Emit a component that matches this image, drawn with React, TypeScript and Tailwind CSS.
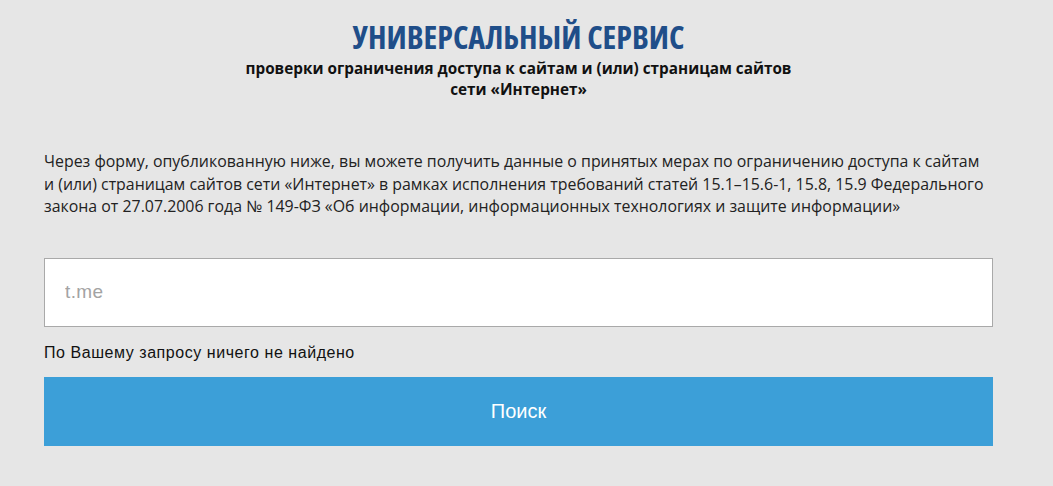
export default function App() {
  return (
    <div className="min-h-[486px] w-full bg-[#e6e6e6] font-['Open_Sans',sans-serif]">
      <div className="ml-[44px] w-[949px] pt-[18px]">
        <h1 className="text-center text-[32px] font-bold leading-[38px] text-[#1f4e89] [font-stretch:75%]">
          УНИВЕРСАЛЬНЫЙ СЕРВИС
        </h1>
        <p className="mt-[2px] text-center text-[15.3px] font-bold leading-[21px] text-[#111]">
          проверки ограничения доступа к сайтам и (или) страницам сайтов
          <br />
          сети «Интернет»
        </p>
        <p className="mt-[50px] text-[15.9px] leading-[22.5px] text-[#222]">
          Через форму, опубликованную ниже, вы можете получить данные о принятых мерах по ограничению доступа к сайтам
          и (или) страницам сайтов сети «Интернет» в рамках исполнения требований статей 15.1–15.6-1, 15.8, 15.9 Федерального
          закона от 27.07.2006 года № 149-ФЗ «Об информации, информационных технологиях и защите информации»
        </p>
        <div className="mt-[40px] flex h-[69px] items-center border border-[#a9a9a9] bg-white px-[20px]">
          <input
            className="w-full bg-transparent font-['Liberation_Sans',Arial,sans-serif] text-[19px] tracking-[0.4px] text-[#333] outline-none placeholder:text-[#a3a3a3]"
            placeholder="t.me"
          />
        </div>
        <p className="mt-[15px] font-['Liberation_Sans',Arial,sans-serif] text-[16px] leading-[22px] tracking-[0.55px] text-[#111]">
          По Вашему запросу ничего не найдено
        </p>
        <button className="mt-[13px] flex h-[69px] w-full items-center justify-center bg-[#3c9fd8] font-['Liberation_Sans',Arial,sans-serif] text-[20px] text-white">
          Поиск
        </button>
      </div>
    </div>
  );
}
